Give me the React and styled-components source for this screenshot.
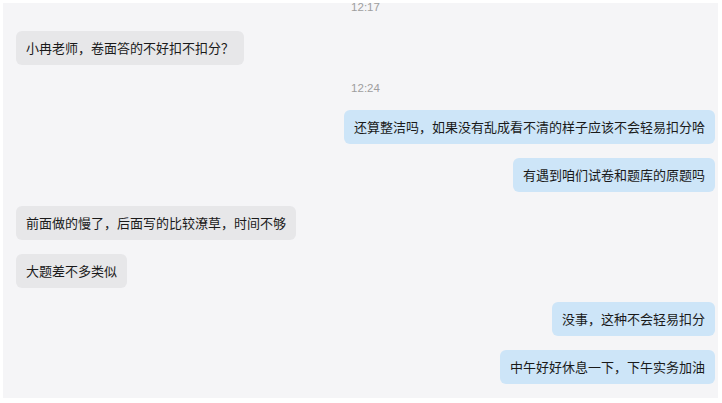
import React from "react"
import styled, { createGlobalStyle } from "styled-components"

const GlobalStyle = createGlobalStyle`
  html, body {
    margin: 0;
    padding: 0;
    background: #ffffff;
  }
  body {
    font-family: "Noto Sans CJK SC", "Liberation Sans", sans-serif;
  }
`

const Page = styled.div`
  width: 722px;
  height: 403px;
  padding: 3px 4px 5px 3px;
  box-sizing: border-box;
  overflow: hidden;
`

const Panel = styled.div`
  height: 100%;
  background: #f5f5f7;
  display: flex;
  flex-direction: column;
  padding: 0 3px 0 13px;
  box-sizing: border-box;
`

const TimeStamp = styled.div`
  align-self: center;
  font-family: "Liberation Sans", Arial, sans-serif;
  font-size: 11.5px;
  line-height: 12px;
  color: #9e9e9e;
  margin-top: ${(p) => p.$top}px;
`

const Row = styled.div`
  display: flex;
  justify-content: ${(p) => (p.$mine ? "flex-end" : "flex-start")};
  margin-top: ${(p) => p.$top}px;
`

const Bubble = styled.div`
  padding: 8px 10px;
  font-size: 13px;
  line-height: 18px;
  color: #1a1a1a;
  border-radius: 6px;
  background: ${(p) => (p.$mine ? "#cde5f8" : "#e7e7e9")};
  white-space: nowrap;
`

const messages = [
  { time: "12:17", top: -2 },
  { text: "小冉老师，卷面答的不好扣不扣分？", top: 18 },
  { time: "12:24", top: 17 },
  { text: "还算整洁吗，如果没有乱成看不清的样子应该不会轻易扣分哈", mine: true, top: 16 },
  { text: "有遇到咱们试卷和题库的原题吗", mine: true, top: 14 },
  { text: "前面做的慢了，后面写的比较潦草，时间不够", top: 14 },
  { text: "大题差不多类似", top: 14 },
  { text: "没事，这种不会轻易扣分", mine: true, top: 14 },
  { text: "中午好好休息一下，下午实务加油", mine: true, top: 14 },
]

export default function App() {
  return (
    <>
      <GlobalStyle />
      <Page>
        <Panel>
          {messages.map((m, i) =>
            m.time ? (
              <TimeStamp key={i} $top={m.top}>
                {m.time}
              </TimeStamp>
            ) : (
              <Row key={i} $mine={m.mine} $top={m.top}>
                <Bubble $mine={m.mine}>{m.text}</Bubble>
              </Row>
            )
          )}
        </Panel>
      </Page>
    </>
  )
}
